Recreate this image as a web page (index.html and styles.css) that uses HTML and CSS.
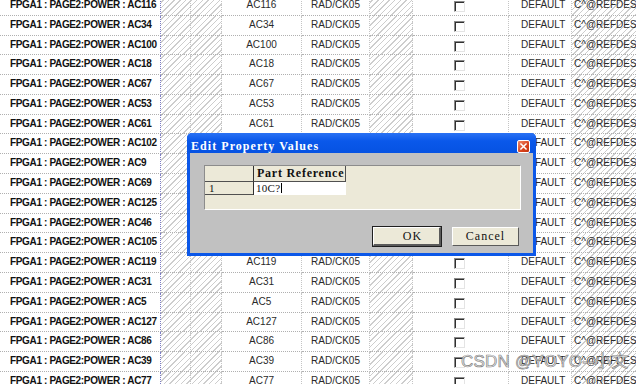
FILE: index.html
```html
<!DOCTYPE html>
<html>
<head>
<meta charset="utf-8">
<link rel="stylesheet" href="styles.css">
</head>
<body>
<div class="sheet" id="sheet"></div>

<div class="dlg">
  <div class="title">
    <span class="title-text">Edit Property Values</span>
    <span class="close"><svg width="13" height="13" viewBox="0 0 13 13"><path d="M3.5 3.5 L9.5 9.5 M9.5 3.5 L3.5 9.5" stroke="#fff" stroke-width="1.8" stroke-linecap="square"/></svg></span>
  </div>
  <div class="body">
    <div class="panel">
      <div class="pgrid">
        <div class="ph0"></div>
        <div class="ph1">Part Reference</div>
        <div class="pr0">1</div>
        <div class="pr1">10C?<span class="caret"></span></div>
      </div>
    </div>
    <div class="btns">
      <div class="btn def">OK</div>
      <div class="btn">Cancel</div>
    </div>
  </div>
</div>

<div class="wm">CSDN @YOYO--小文</div>

<script>
var ids = ["AC116","AC34","AC100","AC18","AC67","AC53","AC61","AC102","AC9","AC69","AC125","AC46","AC105","AC119","AC31","AC5","AC127","AC86","AC39","AC77"];
var html = "";
ids.forEach(function(id){
  html += '<div class="row">' +
    '<div class="c name">FPGA1 : PAGE2:POWER : ' + id + '</div>' +
    '<div class="c hatch"></div>' +
    '<div class="c hatch"></div>' +
    '<div class="c mid">' + id + '</div>' +
    '<div class="c mid">RAD/CK05</div>' +
    '<div class="c hatch"></div>' +
    '<div class="c"><div class="chk"></div></div>' +
    '<div class="c def">DEFAULT</div>' +
    '<div class="c hatch ref">C^@REFDES</div>' +
    '</div>';
});
document.getElementById("sheet").innerHTML = html;
</script>
</body>
</html>
```

FILE: styles.css
```css
html, body {
  margin: 0;
  padding: 0;
}
body {
  width: 636px;
  height: 384px;
  overflow: hidden;
  background: #fff;
  position: relative;
  font-family: "Liberation Sans", Arial, sans-serif;
}
.sheet {
  margin-top: -4.1px;
}
.row {
  display: grid;
  grid-template-columns: 161px 30px 31px 80px 68px 43px 96px 63px 64px;
  height: 19.8px;
}
.c {
  box-sizing: border-box;
  border-bottom: 1px dotted #b0b0b0;
  border-right: 1px dotted #c4c4c4;
  font-size: 10px;
  line-height: 17px;
  color: #2a2a2a;
  white-space: nowrap;
  overflow: hidden;
}
.name {
  font-weight: bold;
  color: #111;
  padding-left: 10px;
  letter-spacing: -0.35px;
  border-right: 1px dotted #7c7cc4;
}
.mid {
  text-align: center;
}
.def {
  padding-left: 12px;
}
.ref {
  padding-left: 2px;
  border-right: none;
}
.hatch {
  background: repeating-linear-gradient(135deg, #ffffff 0 3px, #cdcdcd 3px 4px);
  background-attachment: fixed;
}
.chk {
  width: 11px;
  height: 11px;
  margin: 5px 0 0 41px;
  box-sizing: border-box;
  background: #fff;
  border-top: 1px solid #8a8a8a;
  border-left: 1px solid #8a8a8a;
  border-right: 1px solid #e4e4e4;
  border-bottom: 1px solid #e4e4e4;
  box-shadow: inset 1px 1px 0 #303030;
}

/* dialog */
.dlg {
  position: absolute;
  left: 187px;
  top: 133px;
  width: 349px;
  height: 123px;
  box-sizing: border-box;
  background: #0b57e8;
  border-radius: 5px 5px 0 0;
  padding: 0 3px 3px;
  display: flex;
  flex-direction: column;
}
.title {
  height: 20px;
  flex: none;
  display: flex;
  justify-content: space-between;
  align-items: flex-start;
  background: linear-gradient(#2a72f4, #0a58ea 40%, #0652e2);
  margin: 0 -3px;
  padding: 0 6px 0 4px;
  border-radius: 5px 5px 0 0;
}
.title-text {
  color: #fff;
  font-family: "Liberation Serif", "Times New Roman", serif;
  font-weight: bold;
  font-size: 12px;
  letter-spacing: 1.05px;
  line-height: 14px;
  margin-top: 6px;
}
.close {
  width: 13px;
  height: 13px;
  margin-top: 7px;
  box-sizing: border-box;
  border: 1px solid #fff;
  border-radius: 2px;
  background: linear-gradient(135deg, #f08a6a, #d8421c 60%, #c23410);
  display: flex;
}
.close svg {
  width: 11px;
  height: 11px;
}
.body {
  flex: 1;
  background: #c1c1c1;
  padding: 12px 12px 0 14px;
}
.panel {
  height: 45px;
  box-sizing: border-box;
  background: #ece9d8;
  border: 1px solid;
  border-color: #8c8c8c #ffffff #ffffff #8c8c8c;
}
.pgrid {
  display: grid;
  grid-template-columns: 48px 93px;
  grid-template-rows: 16px 13px;
  font-family: "Liberation Serif", "Times New Roman", serif;
  font-size: 12px;
  color: #111;
}
.ph0 {
  border-bottom: 1px solid #505050;
}
.ph1 {
  box-sizing: border-box;
  border-left: 1px solid #303030;
  border-right: 1px solid #505050;
  border-bottom: 1px solid #505050;
  font-weight: bold;
  letter-spacing: 0.75px;
  padding-left: 3px;
  line-height: 15px;
}
.pr0 {
  box-sizing: border-box;
  border-bottom: 1px solid #505050;
  padding-left: 4px;
  line-height: 12px;
  font-size: 11px;
}
.pr1 {
  box-sizing: border-box;
  background: #fff;
  border-left: 1px solid #303030;
  padding-left: 2px;
  line-height: 12px;
  font-size: 11px;
  letter-spacing: 0.3px;
}
.caret {
  display: inline-block;
  width: 1px;
  height: 10px;
  background: #000;
  vertical-align: -1px;
  margin-left: 1px;
}
.btns {
  display: flex;
  justify-content: flex-end;
  gap: 11px;
  margin-top: 17px;
  margin-right: 2px;
}
.btn {
  width: 67px;
  height: 19px;
  box-sizing: border-box;
  background: #ece9d8;
  border: 1px solid;
  border-color: #ffffff #5a5a5a #5a5a5a #ffffff;
  font-family: "Liberation Serif", "Times New Roman", serif;
  font-size: 12px;
  letter-spacing: 1px;
  line-height: 17px;
  text-align: center;
  color: #111;
}
.btn.def {
  outline: 1px solid #202020;
  border-width: 1px 2px 2px 1px;
  width: 68px;
}

.wm {
  position: absolute;
  left: 461px;
  top: 351px;
  font-family: "Liberation Sans", "Noto Sans CJK SC", sans-serif;
  font-size: 17px;
  line-height: 22px;
  color: rgba(235, 235, 235, 0.9);
  -webkit-text-stroke: 0.7px rgba(120, 120, 120, 0.9);
  white-space: nowrap;
  letter-spacing: 0.2px;
}
```
